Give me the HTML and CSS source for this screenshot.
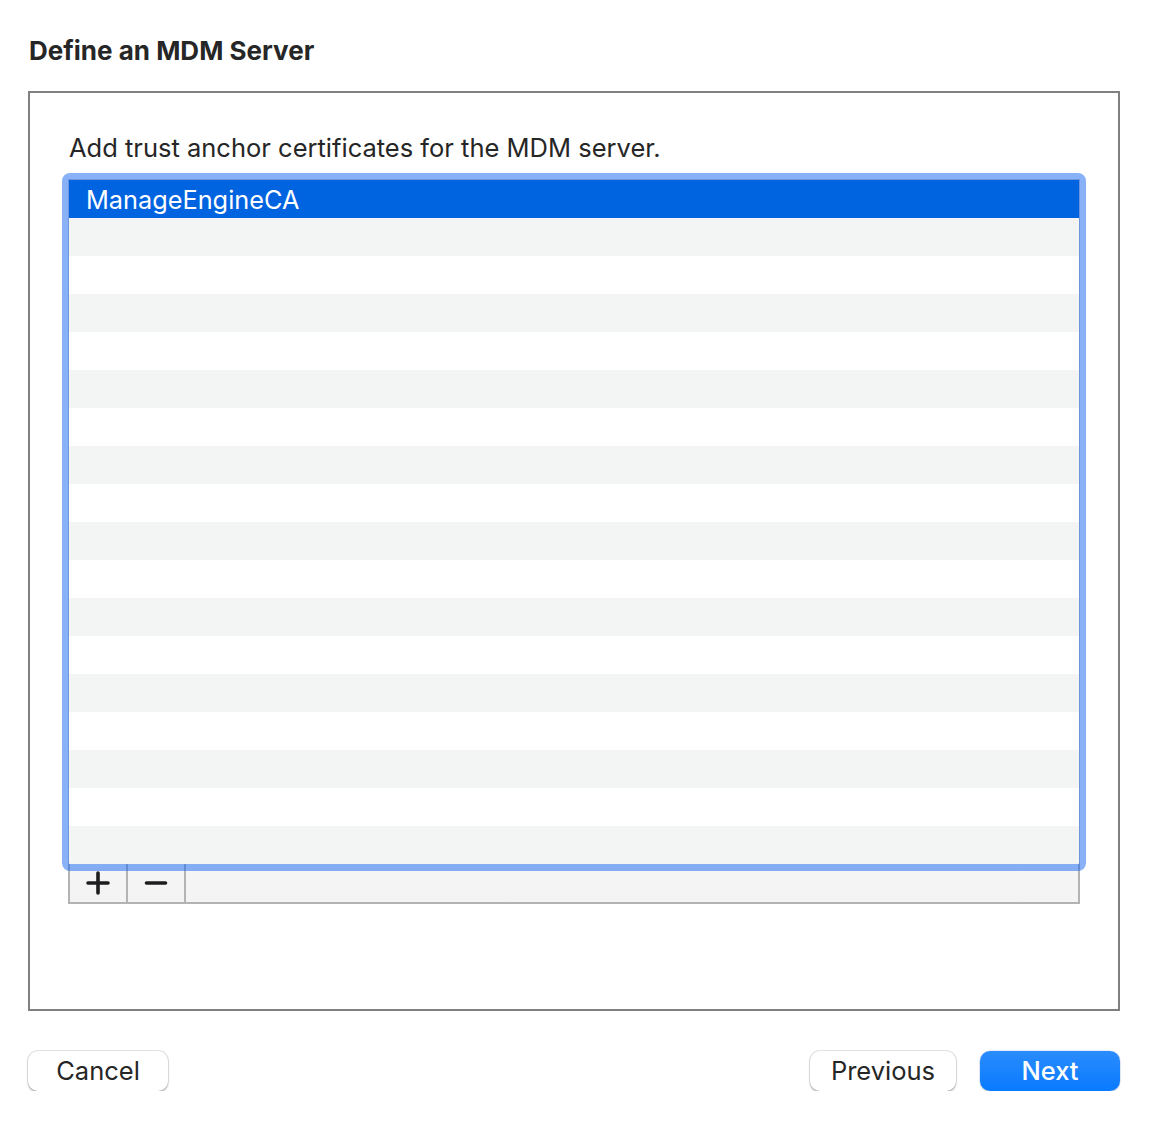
FILE: index.html
```html
<!DOCTYPE html>
<html>
<head>
<meta charset="utf-8">
<link rel="stylesheet" href="styles.css">
</head>
<body>
<div class="page">
  <h1 class="title">Define an MDM Server</h1>
  <div class="panel">
    <p class="prompt">Add trust anchor certificates for the MDM server.</p>
    <div class="table-wrap">
      <div class="table">
        <div class="row selected">ManageEngineCA</div>
        <div class="row alt"></div>
        <div class="row"></div>
        <div class="row alt"></div>
        <div class="row"></div>
        <div class="row alt"></div>
        <div class="row"></div>
        <div class="row alt"></div>
        <div class="row"></div>
        <div class="row alt"></div>
        <div class="row"></div>
        <div class="row alt"></div>
        <div class="row"></div>
        <div class="row alt"></div>
        <div class="row"></div>
        <div class="row alt"></div>
        <div class="row"></div>
        <div class="row alt"></div>
      </div>
      <div class="focus-ring"></div>
      <div class="toolbar">
        <div class="tool">
          <svg width="24" height="24" viewBox="0 0 24 24"><path d="M12 2v20M2 12h20" stroke="#1d1d1f" stroke-width="3.6" stroke-linecap="round" fill="none"/></svg>
        </div>
        <div class="tool">
          <svg width="24" height="24" viewBox="0 0 24 24"><path d="M2.5 12h19" stroke="#1d1d1f" stroke-width="3.6" stroke-linecap="round" fill="none"/></svg>
        </div>
        <div class="tool-fill"></div>
      </div>
    </div>
  </div>
  <div class="actions">
    <button class="btn">Cancel</button>
    <div class="right">
      <button class="btn prev">Previous</button>
      <button class="btn primary">Next</button>
    </div>
  </div>
</div>
</body>
</html>
```
FILE: styles.css
```css
html, body {
  margin: 0;
  padding: 0;
  background: #ffffff;
}
body {
  font-family: Inter, "Open Sans", "Liberation Sans", sans-serif;
  color: #222222;
}
.page {
  padding: 0 29px 0 28px;
  width: 1092px;
}
.title {
  margin: 0;
  padding-top: 34px;
  font-size: 26px;
  line-height: 34px;
  font-weight: 700;
  padding-left: 1px;
  color: #262626;
}
.panel {
  margin-top: 23px;
  border: 2px solid #808080;
  box-sizing: border-box;
  height: 920px;
  padding: 37px 0 0 38px;
}
.prompt {
  margin: 0 0 0 1px;
  font-size: 25.5px;
  line-height: 36px;
  color: #262626;
}
.table-wrap {
  position: relative;
  width: 1012px;
  margin-top: 13px;
}
.table {
  border: 1px solid #c6c6c6;
  border-bottom: none;
}
.row {
  height: 38px;
  background: #ffffff;
}
.row.alt {
  background: #f3f4f4;
}
.row.selected {
  background: #0064e1;
  color: #ffffff;
  font-size: 25.3px;
  line-height: 40px;
  padding-left: 17px;
}
.focus-ring {
  position: absolute;
  left: -6px;
  top: -6px;
  width: 1024px;
  height: 698px;
  box-sizing: border-box;
  border: 7px solid rgba(20, 100, 240, 0.5);
  border-radius: 8px;
}
.toolbar {
  display: flex;
  height: 38px;
  border: 2px solid #b3b3b3;
  border-top: none;
  background: linear-gradient(#f6f6f6, #f3f3f3);
}
.tool {
  width: 56px;
  display: flex;
  align-items: center;
  justify-content: center;
  border-right: 2px solid #b3b3b3;
  padding-top: 0;
}
.tool-fill {
  flex: 1;
}
.actions {
  display: flex;
  justify-content: space-between;
  margin-top: 40px;
}
.right {
  display: flex;
  gap: 24px;
}
.btn {
  font-family: Inter, "Open Sans", "Liberation Sans", sans-serif;
  font-size: 25.5px;
  height: 40px;
  width: 140px;
  border: none;
  border-radius: 10px;
  background: #ffffff;
  color: #262626;
  box-shadow: 0 0 0 1px rgba(0, 0, 0, 0.1), 0 1.5px 2px rgba(0, 0, 0, 0.22);
  padding: 0;
  line-height: 40px;
}
.btn.prev {
  width: 146px;
}
.btn.primary {
  background: linear-gradient(#2a8cfd, #0a7aff);
  color: #ffffff;
  font-weight: 500;
  box-shadow: 0 0 0 0.5px rgba(0, 80, 220, 0.2), 0 1px 1.5px rgba(0, 0, 0, 0.15);
}
```
